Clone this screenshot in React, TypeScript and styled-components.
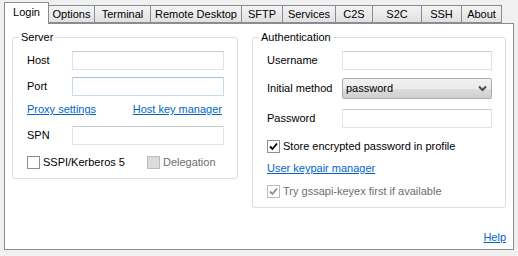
import React from 'react';
import styled, { createGlobalStyle } from 'styled-components';

const Global = createGlobalStyle`
  html, body { margin: 0; padding: 0; background: #f0f0f0; }
  body {
    font-family: "Liberation Sans", Arial, sans-serif;
    font-size: 11px;
    color: #000;
  }
  * { box-sizing: border-box; }
`;

const Window = styled.div`
  width: 518px;
  height: 256px;
  background: #f0f0f0;
  padding: 2px 4px 0 4px;
  display: flex;
  flex-direction: column;
`;

const TabRow = styled.div`
  display: flex;
  align-items: flex-end;
  height: 21px;
  position: relative;
  z-index: 1;
`;

const Tab = styled.div<{ $w: number; $active?: boolean }>`
  width: ${p => p.$w}px;
  height: ${p => (p.$active ? 22 : 18)}px;
  margin-bottom: ${p => (p.$active ? -1 : 0)}px;
  margin-left: -1px;
  &:first-child { margin-left: 0; }
  border: 1px solid #898c95;
  border-bottom: ${p => (p.$active ? 'none' : '1px solid #898c95')};
  background: ${p => (p.$active ? '#ffffff' : 'linear-gradient(#f3f3f3, #ebebeb 50%, #e0e0e0)')};
  position: relative;
  z-index: ${p => (p.$active ? 2 : 1)};
  display: flex;
  align-items: center;
  justify-content: center;
  padding-bottom: ${p => (p.$active ? 2 : 0)}px;
  line-height: 13px;
  white-space: nowrap;
`;

const Panel = styled.div`
  width: 510px;
  height: 227px;
  background: #fff;
  border: 1px solid #898c95;
  display: flex;
  flex-direction: column;
  padding: 7px 7px 5px 7px;
`;

const Columns = styled.div`
  display: flex;
  align-items: flex-start;
  gap: 14px;
`;

const Group = styled.fieldset<{ $w: number }>`
  width: ${p => p.$w}px;
  margin: 0;
  border: 1px solid #d5dfe5;
  border-radius: 3px;
  padding: 7px 13px 9px 14px;
  min-width: 0;
`;

const Legend = styled.legend`
  padding: 0 2px;
  margin-left: -8px;
  line-height: 13px;
`;

const FieldRow = styled.div<{ $label: number; $gap?: number }>`
  display: grid;
  grid-template-columns: ${p => p.$label}px 1fr;
  align-items: center;
  margin-top: ${p => p.$gap ?? 0}px;
`;

const Label = styled.span`
  line-height: 13px;
`;

const TextBox = styled.input<{ $focus?: boolean; $h?: number }>`
  display: block;
  width: 100%;
  height: ${p => p.$h ?? 19}px;
  margin: 0;
  padding: 0 3px;
  font: inherit;
  background: #fff;
  outline: none;
  border: 1px solid ${p => (p.$focus ? '#c5daed' : '#e2e3ea')};
  border-top-color: ${p => (p.$focus ? '#9fbfe0' : '#c9cbd2')};
  border-radius: 1px;
`;

const Combo = styled.div`
  height: 21px;
  border: 1px solid #acacac;
  border-radius: 2px;
  background: linear-gradient(#f2f2f2, #ebebeb 50%, #dddddd 51%, #cfcfcf);
  display: flex;
  align-items: center;
  justify-content: space-between;
  padding: 0 4px 0 3px;
  line-height: 13px;
`;

const LinkRow = styled.div<{ $gap?: number; $split?: boolean; $width?: number }>`
  display: flex;
  justify-content: ${p => (p.$split ? 'space-between' : 'flex-start')};
  width: ${p => (p.$width ? `${p.$width}px` : 'auto')};
  margin-top: ${p => p.$gap ?? 0}px;
  line-height: 13px;
`;

const Link = styled.a`
  color: #0066cc;
  text-decoration: underline;
  cursor: pointer;
`;

const CheckRow = styled.div<{ $gap?: number }>`
  display: flex;
  align-items: center;
  gap: 22px;
  margin-top: ${p => p.$gap ?? 0}px;
  line-height: 13px;
`;

const CheckItem = styled.label<{ $disabled?: boolean }>`
  display: flex;
  align-items: center;
  gap: 3px;
  color: ${p => (p.$disabled ? '#6d6d6d' : '#000')};
`;

const Box = styled.span<{ $disabled?: boolean; $filled?: boolean }>`
  width: 13px;
  height: 13px;
  flex: none;
  border: 1px solid ${p => (p.$disabled ? '#bcbcbc' : '#8e8f8f')};
  background: ${p => (p.$filled ? '#dcdcdc' : '#ffffff')};
  display: flex;
  align-items: center;
  justify-content: center;
`;

const Footer = styled.div`
  margin-top: auto;
  display: flex;
  justify-content: flex-end;
  line-height: 13px;
`;

const Check = ({ color }: { color: string }) => (
  <svg width="9" height="9" viewBox="0 0 9 9">
    <path d="M1 4.5 L3.5 7 L8 1.5" fill="none" stroke={color} strokeWidth="1.8" />
  </svg>
);

const Chevron = () => (
  <svg width="9" height="7" viewBox="0 0 9 7">
    <path d="M1 1.5 L4.5 5 L8 1.5" fill="none" stroke="#4d4d4d" strokeWidth="2" />
  </svg>
);

const tabs: [string, number][] = [
  ['Login', 45],
  ['Options', 47],
  ['Terminal', 57],
  ['Remote Desktop', 92],
  ['SFTP', 42],
  ['Services', 54],
  ['C2S', 38],
  ['S2C', 50],
  ['SSH', 41],
  ['About', 41],
];

export default function App() {
  return (
    <>
      <Global />
      <Window>
        <TabRow>
          {tabs.map(([name, w], i) => (
            <Tab key={name} $w={w} $active={i === 0}>
              {name}
            </Tab>
          ))}
        </TabRow>
        <Panel>
          <Columns>
            <Group $w={226}>
              <Legend>Server</Legend>
              <FieldRow $label={45}>
                <Label>Host</Label>
                <TextBox />
              </FieldRow>
              <FieldRow $label={45} $gap={7}>
                <Label>Port</Label>
                <TextBox $focus />
              </FieldRow>
              <LinkRow $gap={7} $split $width={195}>
                <Link>Proxy settings</Link>
                <Link>Host key manager</Link>
              </LinkRow>
              <FieldRow $label={45} $gap={10}>
                <Label>SPN</Label>
                <TextBox />
              </FieldRow>
              <CheckRow $gap={11}>
                <CheckItem>
                  <Box />
                  SSPI/Kerberos 5
                </CheckItem>
                <CheckItem $disabled>
                  <Box $disabled $filled />
                  Delegation
                </CheckItem>
              </CheckRow>
            </Group>
            <Group $w={254}>
              <Legend>Authentication</Legend>
              <FieldRow $label={75}>
                <Label>Username</Label>
                <TextBox />
              </FieldRow>
              <FieldRow $label={75} $gap={8}>
                <Label>Initial method</Label>
                <Combo>
                  <span>password</span>
                  <Chevron />
                </Combo>
              </FieldRow>
              <FieldRow $label={75} $gap={10}>
                <Label>Password</Label>
                <TextBox />
              </FieldRow>
              <CheckRow $gap={12}>
                <CheckItem>
                  <Box>
                    <Check color="#000" />
                  </Box>
                  Store encrypted password in profile
                </CheckItem>
              </CheckRow>
              <LinkRow $gap={9}>
                <Link>User keypair manager</Link>
              </LinkRow>
              <CheckRow $gap={10}>
                <CheckItem $disabled>
                  <Box $disabled>
                    <Check color="#8d8d8d" />
                  </Box>
                  Try gssapi-keyex first if available
                </CheckItem>
              </CheckRow>
            </Group>
          </Columns>
          <Footer>
            <Link>Help</Link>
          </Footer>
        </Panel>
      </Window>
    </>
  );
}
